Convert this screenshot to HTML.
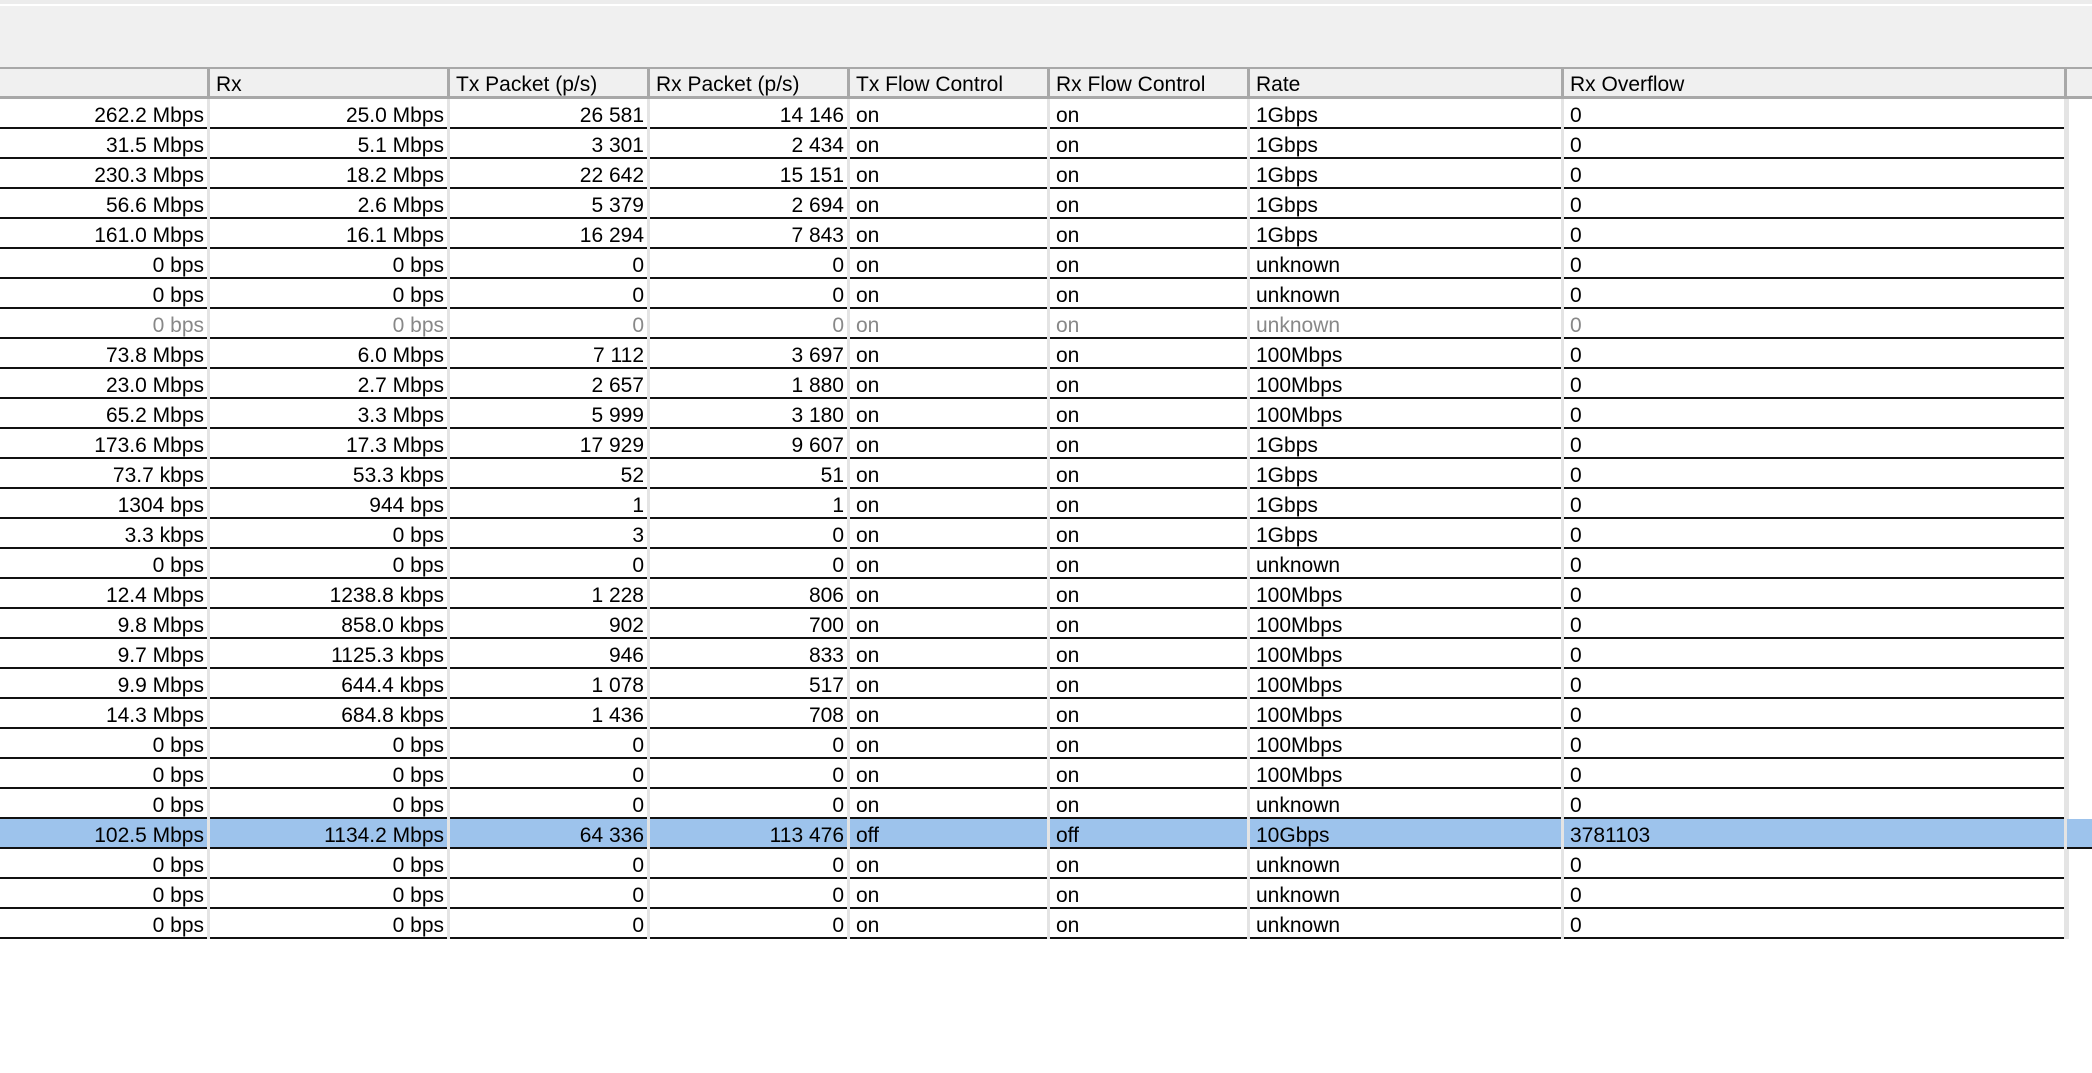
<!DOCTYPE html>
<html><head><meta charset="utf-8"><style>
body{margin:0;width:2092px;height:1073px;background:#fff;overflow:hidden;font-family:"Liberation Sans",Arial,sans-serif;font-size:21px;color:#000;position:relative}
.top{position:absolute;left:0;top:0;width:2092px;height:4px;background:#ececec}
.tb{position:absolute;left:0;top:6px;width:2092px;height:61px;background:#f0f0f0;border-bottom:2px solid #a8a8a8}
.hdr{position:absolute;left:0;top:69px;width:2092px;height:27px;background:#f0f0f0;border-bottom:3px solid #a8a8a8}
.r{position:absolute;left:0;width:2066px;height:28px;border-bottom:2px solid #111}
.r.s{background:#9dc3ec}
.r.g{color:#888}
.c{position:absolute;top:0;height:30px;line-height:28px;padding-top:3px;white-space:nowrap;box-sizing:border-box;border-right:3px solid #e4e4e4}
.hdr .c{border-right:3px solid #a8a8a8;line-height:27px;height:27px;padding-top:2px}
.R{text-align:right;padding-right:3px}
.L{text-align:left;padding-left:6px}
.c0{left:0;width:210px}.c1{left:210px;width:240px}.c2{left:450px;width:200px}.c3{left:650px;width:200px}
.c4{left:850px;width:200px}.c5{left:1050px;width:200px}.c6{left:1250px;width:314px}.c7{left:1564px;width:503px}
.vs{position:absolute;left:2066px;top:99px;width:3px;height:840px;background:#e4e4e4}
</style></head><body>
<div class="top"></div>
<div class="tb"></div>
<div class="hdr">
<div class="c c0"></div><div class="c c1 L">Rx</div><div class="c c2 L">Tx Packet (p/s)</div><div class="c c3 L">Rx Packet (p/s)</div><div class="c c4 L">Tx Flow Control</div><div class="c c5 L">Rx Flow Control</div><div class="c c6 L">Rate</div><div class="c c7 L">Rx Overflow</div>
</div>
<div class="vs"></div>

<div class="r" style="top:99px"><div class="c c0 R">262.2 Mbps</div><div class="c c1 R">25.0 Mbps</div><div class="c c2 R">26 581</div><div class="c c3 R">14 146</div><div class="c c4 L">on</div><div class="c c5 L">on</div><div class="c c6 L">1Gbps</div><div class="c c7 L">0</div></div>
<div class="r" style="top:129px"><div class="c c0 R">31.5 Mbps</div><div class="c c1 R">5.1 Mbps</div><div class="c c2 R">3 301</div><div class="c c3 R">2 434</div><div class="c c4 L">on</div><div class="c c5 L">on</div><div class="c c6 L">1Gbps</div><div class="c c7 L">0</div></div>
<div class="r" style="top:159px"><div class="c c0 R">230.3 Mbps</div><div class="c c1 R">18.2 Mbps</div><div class="c c2 R">22 642</div><div class="c c3 R">15 151</div><div class="c c4 L">on</div><div class="c c5 L">on</div><div class="c c6 L">1Gbps</div><div class="c c7 L">0</div></div>
<div class="r" style="top:189px"><div class="c c0 R">56.6 Mbps</div><div class="c c1 R">2.6 Mbps</div><div class="c c2 R">5 379</div><div class="c c3 R">2 694</div><div class="c c4 L">on</div><div class="c c5 L">on</div><div class="c c6 L">1Gbps</div><div class="c c7 L">0</div></div>
<div class="r" style="top:219px"><div class="c c0 R">161.0 Mbps</div><div class="c c1 R">16.1 Mbps</div><div class="c c2 R">16 294</div><div class="c c3 R">7 843</div><div class="c c4 L">on</div><div class="c c5 L">on</div><div class="c c6 L">1Gbps</div><div class="c c7 L">0</div></div>
<div class="r" style="top:249px"><div class="c c0 R">0 bps</div><div class="c c1 R">0 bps</div><div class="c c2 R">0</div><div class="c c3 R">0</div><div class="c c4 L">on</div><div class="c c5 L">on</div><div class="c c6 L">unknown</div><div class="c c7 L">0</div></div>
<div class="r" style="top:279px"><div class="c c0 R">0 bps</div><div class="c c1 R">0 bps</div><div class="c c2 R">0</div><div class="c c3 R">0</div><div class="c c4 L">on</div><div class="c c5 L">on</div><div class="c c6 L">unknown</div><div class="c c7 L">0</div></div>
<div class="r g" style="top:309px"><div class="c c0 R">0 bps</div><div class="c c1 R">0 bps</div><div class="c c2 R">0</div><div class="c c3 R">0</div><div class="c c4 L">on</div><div class="c c5 L">on</div><div class="c c6 L">unknown</div><div class="c c7 L">0</div></div>
<div class="r" style="top:339px"><div class="c c0 R">73.8 Mbps</div><div class="c c1 R">6.0 Mbps</div><div class="c c2 R">7 112</div><div class="c c3 R">3 697</div><div class="c c4 L">on</div><div class="c c5 L">on</div><div class="c c6 L">100Mbps</div><div class="c c7 L">0</div></div>
<div class="r" style="top:369px"><div class="c c0 R">23.0 Mbps</div><div class="c c1 R">2.7 Mbps</div><div class="c c2 R">2 657</div><div class="c c3 R">1 880</div><div class="c c4 L">on</div><div class="c c5 L">on</div><div class="c c6 L">100Mbps</div><div class="c c7 L">0</div></div>
<div class="r" style="top:399px"><div class="c c0 R">65.2 Mbps</div><div class="c c1 R">3.3 Mbps</div><div class="c c2 R">5 999</div><div class="c c3 R">3 180</div><div class="c c4 L">on</div><div class="c c5 L">on</div><div class="c c6 L">100Mbps</div><div class="c c7 L">0</div></div>
<div class="r" style="top:429px"><div class="c c0 R">173.6 Mbps</div><div class="c c1 R">17.3 Mbps</div><div class="c c2 R">17 929</div><div class="c c3 R">9 607</div><div class="c c4 L">on</div><div class="c c5 L">on</div><div class="c c6 L">1Gbps</div><div class="c c7 L">0</div></div>
<div class="r" style="top:459px"><div class="c c0 R">73.7 kbps</div><div class="c c1 R">53.3 kbps</div><div class="c c2 R">52</div><div class="c c3 R">51</div><div class="c c4 L">on</div><div class="c c5 L">on</div><div class="c c6 L">1Gbps</div><div class="c c7 L">0</div></div>
<div class="r" style="top:489px"><div class="c c0 R">1304 bps</div><div class="c c1 R">944 bps</div><div class="c c2 R">1</div><div class="c c3 R">1</div><div class="c c4 L">on</div><div class="c c5 L">on</div><div class="c c6 L">1Gbps</div><div class="c c7 L">0</div></div>
<div class="r" style="top:519px"><div class="c c0 R">3.3 kbps</div><div class="c c1 R">0 bps</div><div class="c c2 R">3</div><div class="c c3 R">0</div><div class="c c4 L">on</div><div class="c c5 L">on</div><div class="c c6 L">1Gbps</div><div class="c c7 L">0</div></div>
<div class="r" style="top:549px"><div class="c c0 R">0 bps</div><div class="c c1 R">0 bps</div><div class="c c2 R">0</div><div class="c c3 R">0</div><div class="c c4 L">on</div><div class="c c5 L">on</div><div class="c c6 L">unknown</div><div class="c c7 L">0</div></div>
<div class="r" style="top:579px"><div class="c c0 R">12.4 Mbps</div><div class="c c1 R">1238.8 kbps</div><div class="c c2 R">1 228</div><div class="c c3 R">806</div><div class="c c4 L">on</div><div class="c c5 L">on</div><div class="c c6 L">100Mbps</div><div class="c c7 L">0</div></div>
<div class="r" style="top:609px"><div class="c c0 R">9.8 Mbps</div><div class="c c1 R">858.0 kbps</div><div class="c c2 R">902</div><div class="c c3 R">700</div><div class="c c4 L">on</div><div class="c c5 L">on</div><div class="c c6 L">100Mbps</div><div class="c c7 L">0</div></div>
<div class="r" style="top:639px"><div class="c c0 R">9.7 Mbps</div><div class="c c1 R">1125.3 kbps</div><div class="c c2 R">946</div><div class="c c3 R">833</div><div class="c c4 L">on</div><div class="c c5 L">on</div><div class="c c6 L">100Mbps</div><div class="c c7 L">0</div></div>
<div class="r" style="top:669px"><div class="c c0 R">9.9 Mbps</div><div class="c c1 R">644.4 kbps</div><div class="c c2 R">1 078</div><div class="c c3 R">517</div><div class="c c4 L">on</div><div class="c c5 L">on</div><div class="c c6 L">100Mbps</div><div class="c c7 L">0</div></div>
<div class="r" style="top:699px"><div class="c c0 R">14.3 Mbps</div><div class="c c1 R">684.8 kbps</div><div class="c c2 R">1 436</div><div class="c c3 R">708</div><div class="c c4 L">on</div><div class="c c5 L">on</div><div class="c c6 L">100Mbps</div><div class="c c7 L">0</div></div>
<div class="r" style="top:729px"><div class="c c0 R">0 bps</div><div class="c c1 R">0 bps</div><div class="c c2 R">0</div><div class="c c3 R">0</div><div class="c c4 L">on</div><div class="c c5 L">on</div><div class="c c6 L">100Mbps</div><div class="c c7 L">0</div></div>
<div class="r" style="top:759px"><div class="c c0 R">0 bps</div><div class="c c1 R">0 bps</div><div class="c c2 R">0</div><div class="c c3 R">0</div><div class="c c4 L">on</div><div class="c c5 L">on</div><div class="c c6 L">100Mbps</div><div class="c c7 L">0</div></div>
<div class="r" style="top:789px"><div class="c c0 R">0 bps</div><div class="c c1 R">0 bps</div><div class="c c2 R">0</div><div class="c c3 R">0</div><div class="c c4 L">on</div><div class="c c5 L">on</div><div class="c c6 L">unknown</div><div class="c c7 L">0</div></div>
<div class="r s" style="top:819px;width:2092px"><div class="c c0 R">102.5 Mbps</div><div class="c c1 R">1134.2 Mbps</div><div class="c c2 R">64 336</div><div class="c c3 R">113 476</div><div class="c c4 L">off</div><div class="c c5 L">off</div><div class="c c6 L">10Gbps</div><div class="c c7 L">3781103</div></div>
<div class="r" style="top:849px"><div class="c c0 R">0 bps</div><div class="c c1 R">0 bps</div><div class="c c2 R">0</div><div class="c c3 R">0</div><div class="c c4 L">on</div><div class="c c5 L">on</div><div class="c c6 L">unknown</div><div class="c c7 L">0</div></div>
<div class="r" style="top:879px"><div class="c c0 R">0 bps</div><div class="c c1 R">0 bps</div><div class="c c2 R">0</div><div class="c c3 R">0</div><div class="c c4 L">on</div><div class="c c5 L">on</div><div class="c c6 L">unknown</div><div class="c c7 L">0</div></div>
<div class="r" style="top:909px"><div class="c c0 R">0 bps</div><div class="c c1 R">0 bps</div><div class="c c2 R">0</div><div class="c c3 R">0</div><div class="c c4 L">on</div><div class="c c5 L">on</div><div class="c c6 L">unknown</div><div class="c c7 L">0</div></div>
</body></html>
